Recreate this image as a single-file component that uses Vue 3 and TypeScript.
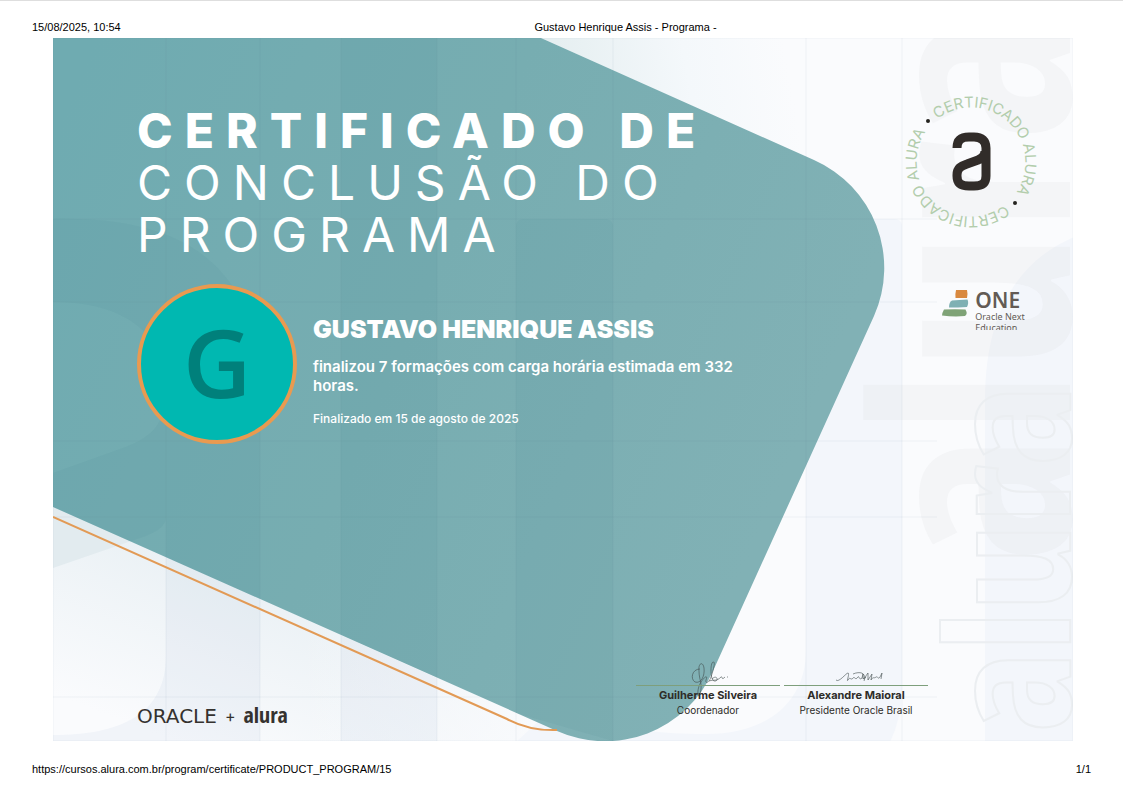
<script setup lang="ts">
interface Signatory {
  name: string
  role: string
  strokes: string[]
}

const printedAt = '15/08/2025, 10:54'
const documentTitle = 'Gustavo Henrique Assis - Programa -'
const certificateUrl = 'https://cursos.alura.com.br/program/certificate/PRODUCT_PROGRAM/15'

const student = {
  initial: 'G',
  name: 'GUSTAVO HENRIQUE ASSIS',
  summary: 'finalizou 7 formações com carga horária estimada em 332 horas.',
  finished: 'Finalizado em 15 de agosto de 2025',
}

const signatories: Signatory[] = [
  {
    name: 'Guilherme Silveira',
    role: 'Coordenador',
    strokes: [
      'M64 6C56 6 54 16 59 19C65 21 69 13 68 5C67 -2 62 0 63 8C63 17 67 21 64 31C62 37 60 27 65 19C69 13 72 12 70 17C69 21 73 20 75 14C77 8 80 -2 77 -1C74 0 74 19 79 18C83 18 81 11 76 16',
      'M73 18C79 16 80 19 85 14C87 13 85 18 89 14M91 14H92',
    ],
  },
  {
    name: 'Alexandre Maioral',
    role: 'Presidente Oracle Brasil',
    strokes: [
      'M52 17C55 20 62 10 64 10C66 10 62 20 64 17C66 13 67 18 69 15C71 13 71 18 74 14C75 12 75 18 78 15L79 11L79 16L82 14',
      'M69 11C76 8 82 10 80 16M80 18C81 14 83 11 84 10L84 17L88 11L87 17C89 13 90 16 92 14C94 13 94 17 96 14L98 10L97 16',
    ],
  },
]

const gridColumns: number[] = [166, 260, 341, 437, 516, 613, 806, 902]
const gridRows: number[] = [219, 302, 441, 517, 697]
</script>

<template>
  <div class="sheet">
    <header class="print-line print-header">
      <time>{{ printedAt }}</time>
      <span class="doc-title">{{ documentTitle }}</span>
      <span></span>
    </header>

    <main class="certificate">
      <svg class="artwork" viewBox="53 38 1020 703" preserveAspectRatio="none" aria-hidden="true">
        <defs>
          <linearGradient id="teal" gradientUnits="userSpaceOnUse" x1="60" y1="120" x2="800" y2="440">
            <stop offset="0" stop-color="#6fabb1" />
            <stop offset="0.5" stop-color="#77adb1" />
            <stop offset="1" stop-color="#81b1b5" />
          </linearGradient>
          <linearGradient id="topHaze" gradientUnits="userSpaceOnUse" x1="560" y1="60" x2="780" y2="20">
            <stop offset="0" stop-color="#e6eff1" />
            <stop offset="0.55" stop-color="#f4f8fb" />
            <stop offset="1" stop-color="#fafbfd" />
          </linearGradient>
          <linearGradient id="lowHaze" gradientUnits="userSpaceOnUse" x1="240" y1="560" x2="170" y2="740">
            <stop offset="0" stop-color="#e9f0f4" />
            <stop offset="1" stop-color="#fafbfd" />
          </linearGradient>
          <linearGradient id="lowFade" gradientUnits="userSpaceOnUse" x1="300" y1="0" x2="560" y2="0">
            <stop offset="0" stop-color="#fafbfd" stop-opacity="0" />
            <stop offset="1" stop-color="#fafbfd" />
          </linearGradient>
          <clipPath id="tealArea">
            <path d="M53 38H541L814 160A118 118 0 0 1 874 316L713 671A118 118 0 0 1 557 731L53 507Z" />
          </clipPath>
        </defs>

        <rect x="53" y="38" width="1021" height="704" fill="#fafbfd" />
        <path d="M541 38H800V154L541 38Z" fill="url(#topHaze)" />
        <path d="M53 500L557 731V742H53Z" fill="url(#lowHaze)" />
        <path d="M300 600L620 742H300Z" fill="url(#lowFade)" />
        <path d="M53 500L140 538L53 568Z" fill="#e2ebef" />

        <g fill="#f3f6fb">
          <path d="M806 742V227Q806 219 814 219H894Q902 219 902 227V690Q901 720 890 742Z" />
          <path d="M985 742V400C985 310 1020 260 1074 237V742Z" />
          <path
            d="M516 742L540 720H613C630 730 660 734 706 734C770 734 806 700 806 650V742Z"
          />
        </g>

        <text class="word-solid" transform="translate(1070 562) rotate(-90)">alura</text>
        <text class="word-outline" transform="translate(1070 732) rotate(-90)">alura</text>

        <path
          d="M53 38H541L814 160A118 118 0 0 1 874 316L713 671A118 118 0 0 1 557 731L53 507Z"
          fill="url(#teal)"
        />

        <g fill="#3e858b" fill-opacity="0.08" clip-path="url(#tealArea)">
          <path
            d="M53 219C180 216 250 262 260 372V600L166 558V517C166 528 152 534 140 538L53 568V473L120 449C156 437 166 420 166 390C166 330 120 302 53 302Z"
          />
          <path d="M341 38H437V678L341 635Z" />
          <path d="M516 227Q516 219 524 219H605Q613 219 613 227V741L516 713Z" />
        </g>
        <g fill="#8ba7cf" fill-opacity="0.08">
          <path d="M166 557L260 599V742H53V735C120 735 166 715 166 655Z" />
          <path d="M341 635L437 678V742H341Z" />
        </g>

        <g class="grid-lines">
          <line v-for="x in gridColumns" :key="`c${x}`" :x1="x" :x2="x" y1="38" y2="742" />
          <line v-for="y in gridRows" :key="`r${y}`" x1="53" x2="937" :y1="y" :y2="y" />
          <rect x="53" y="38" width="1020" height="703" />
        </g>

        <path class="accent-line" d="M53 517L507 719Q530 731 557 730" />
      </svg>

      <section class="content">
        <h1 class="headline"><strong>CERTIFICADO DE</strong> CONCLUSÃO DO PROGRAMA</h1>
        <div class="student">
          <div class="avatar" aria-hidden="true">{{ student.initial }}</div>
          <div class="details">
            <h2>{{ student.name }}</h2>
            <p class="summary">{{ student.summary }}</p>
            <p class="finished">{{ student.finished }}</p>
          </div>
        </div>
      </section>

      <aside class="badges">
        <svg class="seal" viewBox="-70 -70 140 140" role="img" aria-label="Certificado Alura">
          <defs>
            <path id="ringTop" d="M-40 -37A54 54 0 0 1 40 37" />
            <path id="ringBottom" d="M40 37A54 54 0 0 1 -40 -37" />
          </defs>
          <text class="ring"><textPath href="#ringTop" startOffset="50%">CERTIFICADO ALURA</textPath></text>
          <text class="ring"><textPath href="#ringBottom" startOffset="50%">CERTIFICADO ALURA</textPath></text>
          <circle cx="-43" cy="-41" r="2" fill="#24231f" />
          <circle cx="44" cy="41" r="2" fill="#24231f" />
          <path
            d="M-14 -14C-14 -22 -10 -25 -2 -25H3C11 -25 15 -21 15 -14V14C15 21 11 24 3 24H-2C-10 24 -14 21 -14 14V13C-14 6 -10 4 -4 2L7 -2Q14 -5 14 -11"
            fill="none"
            stroke="#312c29"
            stroke-width="9"
          />
        </svg>

        <div class="one">
          <svg viewBox="0 0 28 28" width="28" height="28" aria-hidden="true">
            <path d="M14 0H25Q26 4 25 8H13.500Q13 4 14 0Z" fill="#d9893f" />
            <path d="M10 10.500Q17 10 25.500 9.500Q27 13 25 17Q16 17.500 7 17.500Q7 12 10 10.500Z" fill="#7fb0b3" />
            <path d="M2 19.500Q13 19 23.500 19.500Q26 24 23 26Q12 27 0 25.500Q0 23 2 19.500Z" fill="#7fa377" />
          </svg>
          <div class="one-text">
            <strong>ONE</strong>
            <span>Oracle Next<br />Education</span>
          </div>
        </div>
      </aside>

      <footer class="credits">
        <div class="brands">
          <span class="oracle">ORACLE</span>
          <span class="plus">+</span>
          <span class="alura">alura</span>
        </div>
        <div class="signatures">
          <div v-for="person in signatories" :key="person.name" class="signatory">
            <svg class="autograph" viewBox="0 0 144 22" aria-hidden="true">
              <path v-for="stroke in person.strokes" :key="stroke" :d="stroke" />
            </svg>
            <strong>{{ person.name }}</strong>
            <span>{{ person.role }}</span>
          </div>
        </div>
      </footer>
    </main>

    <footer class="print-line print-footer">
      <span>{{ certificateUrl }}</span>
      <span>1/1</span>
    </footer>
  </div>
</template>

<style>
body {
  margin: 0;
  background: #ffffff;
}
</style>

<style scoped>
.sheet {
  box-sizing: border-box;
  min-height: 100vh;
  padding: 19px 32px 16px;
  border-top: 1px solid #dedede;
  color: #000000;
}

.print-line {
  font: 11px/14px 'Liberation Sans', Arial, sans-serif;
}

.print-header {
  display: grid;
  grid-template-columns: 1fr auto 1fr;
  padding: 0 0 4px;
}

.doc-title {
  margin-left: 128px;
}

.print-footer {
  display: flex;
  justify-content: space-between;
  padding-top: 21px;
}

.certificate {
  position: relative;
  display: grid;
  grid-template-columns: 1fr 205px;
  grid-template-rows: 1fr auto;
  aspect-ratio: 1020 / 703;
  margin: 0 18px 0 21px;
  overflow: hidden;
  font-family: Inter, 'Open Sans', sans-serif;
}

.artwork {
  position: absolute;
  inset: 0;
  width: 100%;
  height: 100%;
}

.word-solid,
.word-outline {
  font-family: 'Liberation Sans Narrow', 'Open Sans Condensed', 'DejaVu Sans Condensed', sans-serif;
}

.word-solid {
  font-size: 272px;
  fill: #c0c0c2;
  fill-opacity: 0.1;
}

.word-outline {
  font-size: 172px;
  fill: none;
  stroke: #ebeef1;
  stroke-width: 2;
}

.grid-lines {
  fill: none;
  stroke: #5a7e8a;
  stroke-opacity: 0.07;
  stroke-width: 1;
}

.accent-line {
  fill: none;
  stroke: #e29a55;
  stroke-width: 2;
}

.content,
.badges,
.credits {
  position: relative;
}

.content {
  padding: 67px 0 0 84px;
  color: #ffffff;
}

.headline {
  max-width: 640px;
  margin: 0;
  font-size: 48px;
  font-weight: 400;
  line-height: 52px;
  letter-spacing: 12px;
}

.headline strong {
  display: block;
  font-weight: 800;
}

.student {
  display: flex;
  gap: 16px;
  margin-top: 23px;
}

.avatar {
  box-sizing: border-box;
  display: grid;
  flex: none;
  place-items: center;
  width: 160px;
  height: 160px;
  padding-bottom: 4px;
  border: 4px solid #e99a50;
  border-radius: 50%;
  background: #00b8b1;
  color: #00807b;
  font: 600 94px/120px 'Open Sans', 'Noto Sans', sans-serif;
}

.details {
  padding-top: 31px;
}

.details h2 {
  margin: 0;
  font-size: 25px;
  font-weight: 900;
  line-height: 28px;
}

.summary {
  max-width: 430px;
  margin: 14px 0 16px;
  font-size: 15px;
  font-weight: 600;
  line-height: 19px;
}

.finished {
  margin: 0;
  font-size: 12px;
  font-weight: 500;
  line-height: 16px;
}

.badges {
  display: flex;
  flex-direction: column;
  align-items: center;
  padding-top: 54px;
}

.seal {
  width: 140px;
  height: 140px;
}

.ring {
  fill: #b2cdac;
  font-size: 15px;
  font-weight: 400;
  text-anchor: middle;
}

.one {
  display: flex;
  gap: 5px;
  height: 41px;
  margin: 57px 0 0 26px;
  overflow: hidden;
  color: #635b55;
  font-family: 'Noto Sans', 'Open Sans', sans-serif;
}

.one svg {
  margin-top: 1px;
}

.one-text strong {
  display: block;
  font-size: 21px;
  font-weight: 600;
  line-height: 22px;
}

.one-text span {
  display: block;
  font-size: 9px;
  line-height: 11px;
  white-space: nowrap;
}

.credits {
  grid-column: 1 / -1;
  display: flex;
  align-items: flex-end;
  justify-content: space-between;
  padding: 0 145px 12px 84px;
}

.brands {
  display: flex;
  align-items: center;
  gap: 8px;
  color: #35322f;
  line-height: 22px;
}

.oracle {
  font: 20px/22px 'DejaVu Sans', sans-serif;
}

.plus {
  font-size: 16px;
}

.alura {
  padding-bottom: 4px;
  font: 22px/22px 'Liberation Sans Narrow', 'Open Sans Condensed', sans-serif;
}

.signatures {
  display: flex;
  gap: 4px;
  margin-bottom: 12px;
}

.signatory {
  display: flex;
  flex-direction: column;
  width: 144px;
  color: #2e2c28;
  font-size: 10px;
  line-height: 14px;
  text-align: center;
}

.signatory strong {
  padding-top: 2px;
  border-top: 1px solid #7e9f7c;
  font-size: 11px;
  font-weight: 700;
  line-height: 15px;
}

.autograph {
  display: block;
  width: 100%;
  height: 22px;
  overflow: visible;
  fill: none;
  stroke: #3f4b4c;
  stroke-width: 0.6;
}
</style>
